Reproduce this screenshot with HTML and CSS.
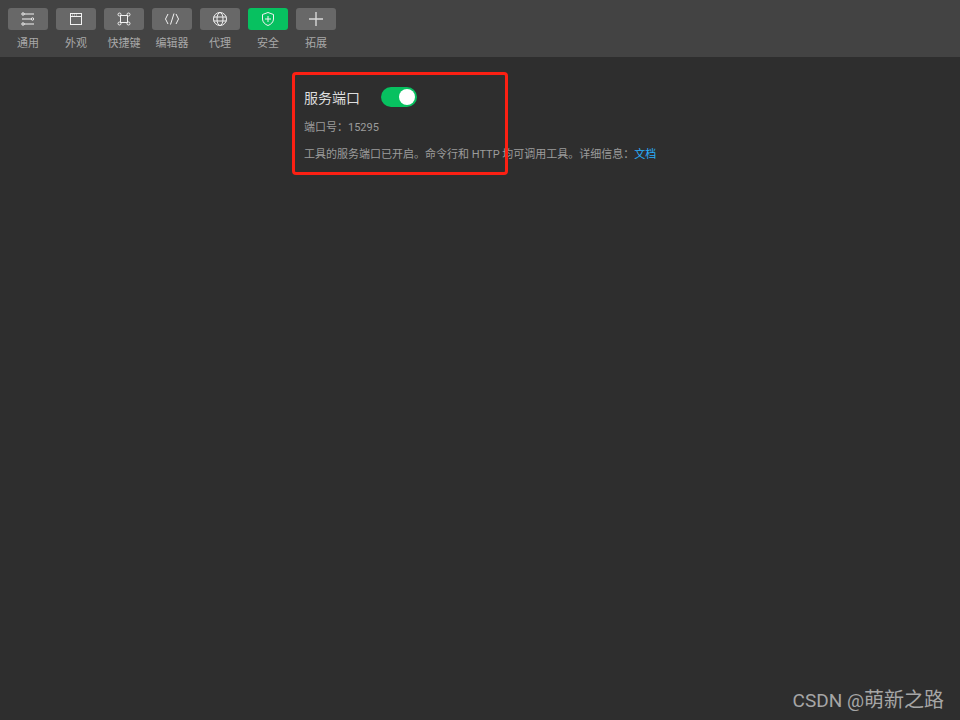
FILE: index.html
```html
<!DOCTYPE html>
<html lang="zh-CN">
<head>
    <meta charset="UTF-8" />
    <meta name="viewport" content="width=device-width, initial-scale=1.0" />
    <title>设置 — 安全</title>
    <link rel="stylesheet" href="styles.css">
</head>
<body>
    <div class="toolbar">
        <div class="tab">
            <div class="tab-icon">
                <svg viewBox="0 0 16 16"><path d="M4 3H14M2 8H11M4 13H14" /><circle cx="3" cy="3" r="1.2" /><circle cx="12.5" cy="8" r="1.2" /><circle cx="3" cy="13" r="1.2" /></svg>
            </div>
            <span>通用</span>
        </div>
        <div class="tab">
            <div class="tab-icon">
                <svg viewBox="0 0 16 16"><rect x="2.5" y="2.5" width="11" height="11" /><path d="M2.5 5.5H13.5" /><path class="dots" d="M4 4H5M6 4H7M8 4H9" /></svg>
            </div>
            <span>外观</span>
        </div>
        <div class="tab">
            <div class="tab-icon">
                <svg viewBox="0 0 16 16"><rect x="4.5" y="4.5" width="7" height="7" /><circle cx="3.5" cy="3.5" r="1.5" /><circle cx="12.5" cy="3.5" r="1.5" /><circle cx="3.5" cy="12.5" r="1.5" /><circle cx="12.5" cy="12.5" r="1.5" /></svg>
            </div>
            <span>快捷键</span>
        </div>
        <div class="tab">
            <div class="tab-icon">
                <svg viewBox="0 0 16 16"><path d="M4 3L1.5 8L4 13M12 3L14.5 8L12 13M10 2.5L6.5 13.5" /></svg>
            </div>
            <span>编辑器</span>
        </div>
        <div class="tab">
            <div class="tab-icon">
                <svg viewBox="0 0 16 16"><circle cx="8" cy="8" r="6.5" /><ellipse cx="8" cy="8" rx="3" ry="6.5" /><path d="M1.5 6H14.5M1.5 10H14.5" /></svg>
            </div>
            <span>代理</span>
        </div>
        <div class="tab active">
            <div class="tab-icon">
                <svg viewBox="0 0 16 16"><path d="M8 1.5L13.5 3.5V8C13.5 11 11 13.5 8 14.5C5 13.5 2.5 11 2.5 8V3.5Z" /><path d="M8 5V11M5 8H11" /></svg>
            </div>
            <span>安全</span>
        </div>
        <div class="tab">
            <div class="tab-icon">
                <svg class="plus" viewBox="0 0 16 16"><path d="M8 1V15M1 8H15" /></svg>
            </div>
            <span>拓展</span>
        </div>
    </div>

    <div class="content">
        <div class="section">
            <div class="section-head">
                <span class="section-title">服务端口</span>
                <div class="switch"><div class="switch-knob"></div></div>
            </div>
            <p class="port">端口号：<span class="num">15295</span></p>
            <p class="desc">工具的服务端口已开启。命令行和 HTTP 均可调用工具。详细信息：<a href="#">文档</a></p>
            <div class="highlight"></div>
        </div>
    </div>

    <div class="watermark"><span class="watermark-latin">CSDN @</span>萌新之路</div>
</body>
</html>
```

FILE: styles.css
```css
body {
    font-family: Roboto, "Noto Sans CJK SC", sans-serif;
    background-color: #2e2e2e;
    margin: 0;
    padding: 0;
    height: 720px;
    overflow: hidden;
    position: relative;
}

.toolbar {
    height: 57px;
    box-sizing: border-box;
    padding: 8px 0 0 8px;
    display: flex;
    gap: 8px;
    background-color: #434343;
}

.tab {
    width: 40px;
    display: flex;
    flex-direction: column;
    align-items: center;
    gap: 7px;
    font-size: 11px;
    line-height: 14px;
    color: #a8a8a8;
    white-space: nowrap;
}

.tab-icon {
    width: 40px;
    height: 22px;
    border-radius: 3px;
    background-color: #686868;
    display: flex;
    align-items: center;
    justify-content: center;
}

.tab.active .tab-icon {
    background-color: #07c160;
}

.tab-icon svg {
    width: 16px;
    height: 16px;
    fill: none;
    stroke: #f2f2f2;
    stroke-width: 1;
}

.tab-icon svg.plus {
    stroke: #d8d8d8;
    stroke-width: 1.4;
}

.tab-icon svg .dots {
    stroke-width: 1;
    stroke: #d0d0d0;
}

.content {
    padding: 30px 0 0 304px;
}

.section {
    position: relative;
}

.section-head {
    display: flex;
    align-items: center;
    gap: 21px;
    height: 20px;
}

.section-title {
    font-size: 14px;
    color: #dedede;
}

.switch {
    width: 36px;
    height: 20px;
    border-radius: 10px;
    background-color: #07c160;
    position: relative;
}

.switch-knob {
    position: absolute;
    top: 2px;
    right: 2px;
    width: 16px;
    height: 16px;
    border-radius: 50%;
    background-color: #fff;
}

.port, .desc {
    margin: 13px 0 0;
    font-size: 11px;
    line-height: 14px;
    color: #9c9c9c;
    white-space: nowrap;
}

.port {
    margin-top: 14px;
}

.desc a {
    color: #2aaefc;
    text-decoration: none;
}

.highlight {
    position: absolute;
    left: -12px;
    top: -15px;
    width: 216px;
    height: 103px;
    box-sizing: border-box;
    border: 3px solid #fb2013;
    border-radius: 4px;
}

.watermark {
    position: absolute;
    right: 16px;
    bottom: 6px;
    font-size: 20px;
    line-height: 26px;
    color: #a6a6a6;
}

.watermark-latin {
    font-size: 19px;
}
```
